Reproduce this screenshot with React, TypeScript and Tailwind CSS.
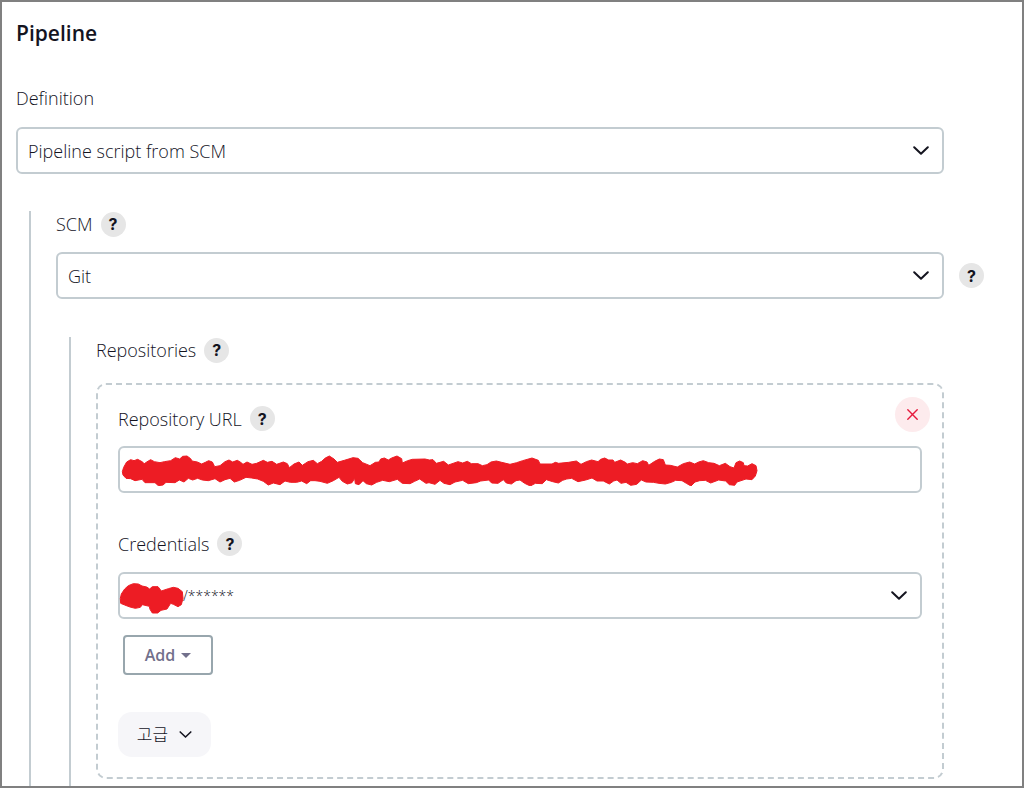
import type { ReactNode } from "react";

function HelpLink({ topic }: { topic: string }) {
  return (
    <a
      href="#help"
      aria-label={`Help for ${topic}`}
      className="flex h-[25px] w-[25px] shrink-0 items-center justify-center rounded-full bg-[#e6e6e6] font-['Inter',sans-serif] text-base leading-6 font-bold text-[#14141f]"
    >
      ?
    </a>
  );
}

function FieldLabel({ htmlFor, children }: { htmlFor: string; children: ReactNode }) {
  return (
    <label htmlFor={htmlFor} className="text-lg leading-6 font-light">
      {children}
    </label>
  );
}

function Chevron({ className }: { className: string }) {
  return (
    <svg viewBox="0 0 16 9" fill="none" stroke="#14141f" strokeLinecap="round" strokeLinejoin="round" className={className} aria-hidden="true">
      <path d="M1.2 1.2 8 7.8l6.8-6.6" strokeWidth="2" />
    </svg>
  );
}

function SelectBox({ id, children, className }: { id: string; children: ReactNode; className: string }) {
  return (
    <div className="relative min-w-0 flex-1">
      <select
        id={id}
        className={`block h-[47px] w-full appearance-none rounded-md border-2 border-[#c3ccd1] bg-white pr-10 font-light ${className}`}
      >
        {children}
      </select>
      <Chevron className="pointer-events-none absolute top-[19px] right-[15px] h-[9px] w-4" />
    </div>
  );
}

export default function App() {
  return (
    <main className="flex min-h-screen flex-col border-2 border-[#808080] bg-white pl-[14px] font-['Open_Sans','Noto_Sans_CJK_KR',sans-serif] text-[#14141f]">
      <h1 className="mt-4 text-[21px] leading-[30px] font-semibold">Pipeline</h1>

      <div className="mt-[38px] mr-[78px] flex flex-col gap-[17px]">
        <FieldLabel htmlFor="definition">Definition</FieldLabel>
        <div className="flex">
          <SelectBox id="definition" className="pl-[10px] text-lg">
            <option>Pipeline script from SCM</option>
          </SelectBox>
        </div>
      </div>

      <section className="mt-[37px] ml-[13px] flex flex-1 flex-col border-l-2 border-[#c3ccd1] pl-[25px]">
        <div className="flex h-[26px] items-center gap-2">
          <FieldLabel htmlFor="scm">SCM</FieldLabel>
          <HelpLink topic="SCM" />
        </div>
        <div className="mt-[15px] mr-[38px] flex items-center gap-[15px]">
          <SelectBox id="scm" className="pl-[10px] text-lg">
            <option>Git</option>
            <option>None</option>
          </SelectBox>
          <HelpLink topic="Git" />
        </div>

        <section className="mt-[38px] ml-[13px] flex-1 border-l-2 border-[#c3ccd1] pl-[25px]">
          <div className="flex h-[26px] items-center gap-2">
            <h2 className="text-lg leading-6 font-light">Repositories</h2>
            <HelpLink topic="Repositories" />
          </div>

          <div className="mt-5 mr-[78px] rounded-[10px] border-2 border-dashed border-[#c3ccd1] px-5 pt-3 pb-5">
            <div className="-mr-2 flex h-[35px] items-end justify-between">
              <div className="flex h-[27px] items-center gap-2">
                <FieldLabel htmlFor="repo-url">Repository URL</FieldLabel>
                <HelpLink topic="Repository URL" />
              </div>
              <button type="button" aria-label="Delete repository" className="flex h-[35px] w-[35px] items-center justify-center rounded-full bg-[#fdebed]">
                <svg viewBox="0 0 11 11" fill="none" stroke="#e6193c" strokeWidth="1.4" strokeLinecap="round" className="h-[11px] w-[11px]" aria-hidden="true">
                  <path d="M.8.8l9.4 9.4M10.2.8.8 10.2" />
                </svg>
              </button>
            </div>
            <div className="relative mt-[14px]">
              <input
                id="repo-url"
                type="text"
                className="block h-[47px] w-full rounded-md border-2 border-[#c3ccd1] bg-white px-[10px] text-lg font-light"
              />
              <svg viewBox="24 18 1920 120" fill="#ed1c24" stroke="#ed1c24" strokeWidth="3" strokeLinejoin="round" className="pointer-events-none absolute top-0 left-0 h-10 w-[640px] max-w-full" aria-hidden="true">
                <path d="M37 95 41 82 50 66 62 59 72 62 83 58 98 66 102 72 110 66 122 59 133 65 150 68 163 65 182 62 196 53 209 57 218 49 231 48 242 56 246 63 262 66 275 72 286 67 296 62 307 66 314 80 330 77 345 65 357 60 368 66 382 61 392 67 399 73 411 66 426 73 440 70 460 61 472 67 486 64 500 73 520 66 532 71 538 83 552 72 567 66 577 76 594 65 610 61 622 71 635 64 646 54 658 48 672 57 682 67 703 61 729 53 744 55 758 68 780 77 796 67 807 66 812 57 823 54 835 60 845 54 861 48 875 56 877 69 893 62 907 58 945 57 958 60 969 59 979 70 1001 64 1015 75 1044 65 1058 69 1072 64 1084 71 1104 71 1117 77 1131 74 1143 66 1159 63 1175 67 1200 73 1220 68 1238 62 1266 54 1285 61 1290 72 1326 72 1336 67 1346 70 1376 67 1399 63 1413 73 1429 65 1445 60 1464 65 1472 58 1484 54 1496 60 1509 60 1514 67 1532 60 1546 67 1552 72 1568 68 1582 71 1598 62 1611 66 1616 76 1634 64 1648 57 1660 59 1666 75 1681 76 1702 81 1720 71 1739 66 1754 72 1766 66 1780 62 1796 68 1812 70 1828 77 1846 70 1860 80 1872 84 1878 68 1889 63 1900 68 1902 77 1913 78 1926 71 1938 77 1941 92 1936 108 1926 119 1908 117 1896 121 1881 126 1874 136 1858 134 1847 123 1826 120 1802 129 1786 121 1769 122 1755 126 1743 138 1729 130 1716 122 1697 121 1684 127 1666 132 1647 130 1630 127 1608 126 1594 120 1580 133 1562 136 1548 127 1533 130 1521 120 1511 123 1498 132 1480 123 1461 123 1446 114 1427 120 1404 125 1385 115 1370 117 1358 121 1345 129 1328 125 1309 119 1297 131 1276 130 1261 138 1244 130 1230 120 1218 122 1204 132 1189 129 1180 119 1164 130 1145 129 1136 120 1112 123 1099 128 1075 131 1058 121 1035 126 1020 134 1002 130 990 121 975 133 957 128 948 130 929 117 914 124 900 131 877 130 862 118 838 125 818 121 800 127 785 135 769 131 759 122 747 134 736 131 734 115 726 128 712 132 697 124 687 112 670 122 652 130 630 124 615 122 602 122 590 131 575 123 560 127 541 127 525 123 510 134 490 129 475 135 460 124 443 117 425 114 408 112 389 121 373 126 360 115 345 119 330 126 315 116 295 122 277 120 263 115 248 120 235 115 222 126 208 120 195 128 168 127 159 135 145 137 135 128 105 128 96 118 75 122 62 116 48 115 39 105Z" />
              </svg>
            </div>

            <div className="mt-[38px] flex h-[25px] items-center gap-2">
              <FieldLabel htmlFor="credentials">Credentials</FieldLabel>
              <HelpLink topic="Credentials" />
            </div>
            <div className="relative mt-4 flex">
              <SelectBox id="credentials" className="pl-[63px] text-sm">
                <option>/******</option>
              </SelectBox>
              <svg viewBox="84 156 201 135" fill="#ed1c24" stroke="#ed1c24" strokeWidth="3" strokeLinejoin="round" className="pointer-events-none absolute top-0 left-0 h-[45px] w-[67px]" aria-hidden="true">
                <path d="M91 235 94 222 104 207 115 197 130 191 145 192 156 198 170 201 179 207 187 200 204 200 214 213 235 206 250 202 264 205 277 215 279 235 274 254 264 260 250 253 242 250 231 267 213 271 203 279 187 279 180 268 178 259 157 254 151 262 136 265 120 261 104 255 92 250Z" />
              </svg>
            </div>

            <button
              type="button"
              className="mt-4 ml-[5px] flex h-10 w-[90px] items-center justify-center gap-[6px] rounded border-2 border-[#98a6ad] bg-white text-base font-semibold text-[#72708c]"
            >
              Add
              <svg viewBox="0 0 10 5" fill="#72708c" className="h-[5px] w-[10px]" aria-hidden="true">
                <path d="M0 0h10L5 5Z" />
              </svg>
            </button>

            <button
              type="button"
              className="mt-[37px] flex h-[45px] w-[93px] items-center justify-center gap-[11px] rounded-[14px] bg-[#f6f6f9] text-[17px] font-light"
            >
              고급
              <Chevron className="h-[7px] w-[13px]" />
            </button>
          </div>
        </section>
      </section>
    </main>
  );
}
